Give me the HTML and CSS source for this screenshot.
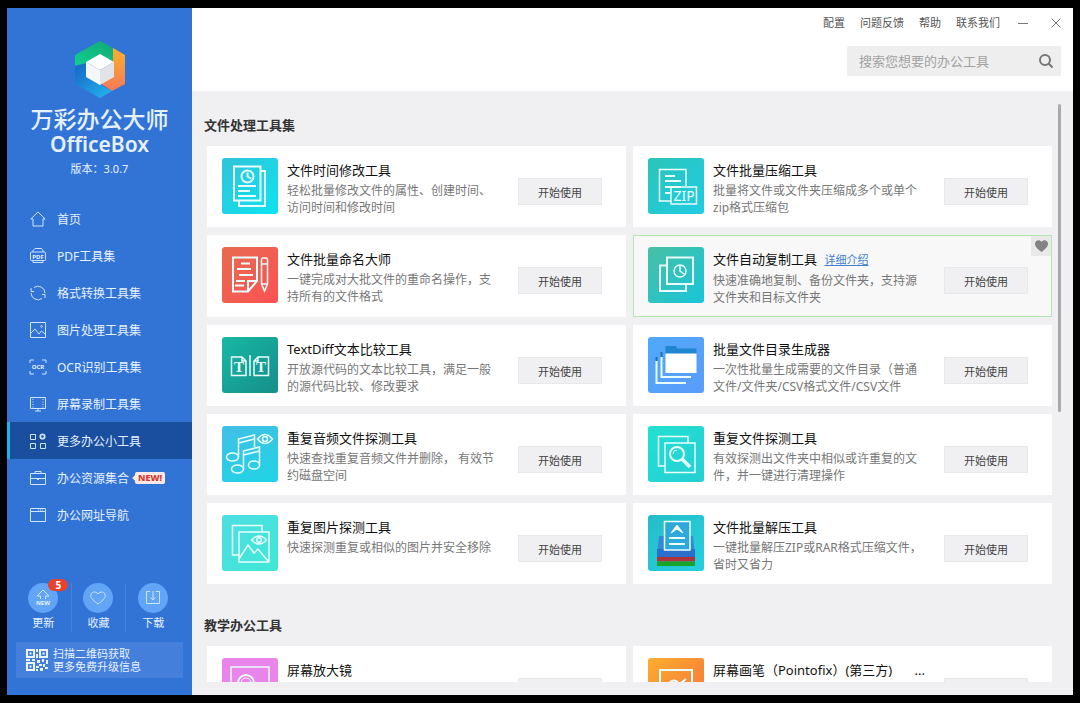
FILE: index.html
```html
<!DOCTYPE html>
<html lang="zh-CN">
<head>
  <meta charset="UTF-8" />
  <meta name="viewport" content="width=device-width, initial-scale=1" />
  <title>万彩办公大师 OfficeBox</title>
  <link rel="stylesheet" href="styles.css">
</head>
<body>

<div class="window">
  <aside class="sidebar">
    <div class="brand">
      <svg class="brand-logo" width="50" height="57" viewBox="0 0 50 57">
        <defs>
          <linearGradient id="lg-green" x1="0" y1="1" x2="1" y2="0"><stop offset="0" stop-color="#0fd090"/><stop offset="1" stop-color="#11a873"/></linearGradient>
          <linearGradient id="lg-orange" x1="0" y1="0" x2="0" y2="1"><stop offset="0" stop-color="#fbb02a"/><stop offset="1" stop-color="#f5785a"/></linearGradient>
          <linearGradient id="lg-blue" x1="0" y1="0" x2="1" y2="1"><stop offset="0" stop-color="#1565c8"/><stop offset="1" stop-color="#25b6ee"/></linearGradient>
        </defs>
        <path d="M0 14 25 0 38 7V22L25 15 12 22 0 25z" fill="url(#lg-green)"/>
        <path d="M38 7 50 14V43L37 50 25 42 38 35z" fill="url(#lg-orange)"/>
        <path d="M0 25 12 22V36L37 50 25 57 0 43z" fill="url(#lg-blue)"/>
        <path d="M25 13 39 21 25 29 11 21z" fill="#fff"/>
        <path d="M11 21 25 29V44L11 36z" fill="#f4f6f8"/>
        <path d="M39 21 25 29V44L39 36z" fill="#e0e3e7"/>
      </svg>
      <h1 class="brand-name">万彩办公大师</h1>
      <p class="brand-en">OfficeBox</p>
      <p class="brand-version">版本：3.0.7</p>
    </div>

    <nav class="nav">
      <a class="nav-item" href="#">
        <svg class="nav-icon" viewBox="0 0 16 16"><path d="M.8 8 8 1l7.200 7H13v7H3V8z"/></svg>
        首页
      </a>
      <a class="nav-item" href="#">
        <svg class="nav-icon" viewBox="0 0 16 16"><path d="M3 4V2.500L5 .5h6.500L13 2.500V4M3 12.500v2h10v-2M1.500 4h13q1 0 1 1v6.500q0 1-1 1h-13q-1 0-1-1V5q0-1 1-1z"/><text x="8" y="10.800" class="icon-word">PDF</text></svg>
        PDF工具集
      </a>
      <a class="nav-item" href="#">
        <svg class="nav-icon" viewBox="0 0 16 16"><path d="M4 2.500A7 7 0 0 1 15 8M12 13.500A7 7 0 0 1 1 8M1 3v3.500h3M15 13V9.500h-3"/></svg>
        格式转换工具集
      </a>
      <a class="nav-item" href="#">
        <svg class="nav-icon" viewBox="0 0 16 16"><path d="M.5 .5h15v15H.5zM1 11l4-4 4 5 2.500-3L15 12"/><circle cx="11.500" cy="4.500" r=".8"/></svg>
        图片处理工具集
      </a>
      <a class="nav-item" href="#">
        <svg class="nav-icon" viewBox="0 0 16 16"><path d="M0 4V1h4M12 1h4v3M16 12v3h-4M4 15H0v-3"/><text x="8" y="10" class="icon-word">OCR</text></svg>
        OCR识别工具集
      </a>
      <a class="nav-item" href="#">
        <svg class="nav-icon" viewBox="0 0 16 16"><path d="M.5 1.500h15v11H.5zM5 15h6M8 12.500V15"/><path d="M3 3v9M13 3v9" stroke-dasharray="1 1.500"/></svg>
        屏幕录制工具集
      </a>
      <a class="nav-item active" href="#">
        <svg class="nav-icon" viewBox="0 0 16 16"><path d="M.5 1.500h5v5h-5zM.5 10.500h5v5h-5zM10.500 10.500h5v5h-5z"/><circle cx="12.500" cy="3.500" r="2.200" stroke-width="1.800"/></svg>
        更多办公小工具
      </a>
      <a class="nav-item" href="#">
        <svg class="nav-icon" viewBox="0 0 16 16"><path d="M.5 3.500h15v11H.5zM5 3.500v-2h6v2M.5 8.500h5.500M10 8.500h5.500M6 8.500h4"/><path d="M7 9.500h2"/></svg>
        办公资源集合
        <span class="tag-new">NEW!</span>
      </a>
      <a class="nav-item" href="#">
        <svg class="nav-icon" viewBox="0 0 16 16"><path d="M.5 1.500h15v13H.5zM.5 4.500h15"/><path d="M8 3h6" stroke-dasharray="1 1"/></svg>
        办公网址导航
      </a>
    </nav>

    <div class="shortcuts">
      <button type="button" class="shortcut">
        <span class="shortcut-circle">
          <svg class="shortcut-icon" viewBox="0 0 16 16"><path d="M5.500 9V6H2L8 0l6 6h-3.500v3"/><text x="8" y="15" class="icon-word">NEW</text></svg>
          <span class="count">5</span>
        </span>
        更新
      </button>
      <button type="button" class="shortcut">
        <span class="shortcut-circle">
          <svg class="shortcut-icon" viewBox="0 0 16 16"><path d="M8 14C4 11 .8 8.500 .8 5.500 .8 1.500 6 .8 8 4c2-3.200 7.200-2.500 7.200 1.500C15.200 8.500 12 11 8 14z"/></svg>
        </span>
        收藏
      </button>
      <button type="button" class="shortcut">
        <span class="shortcut-circle">
          <svg class="shortcut-icon" viewBox="0 0 16 16"><path d="M5 1.500H1.500v12h13v-12H11M8 1v9M5.500 7.500 8 10l2.500-2.500"/></svg>
        </span>
        下载
      </button>
    </div>

    <a class="qr-panel" href="#">
      <svg width="22" height="22" viewBox="0 0 22 22">
        <path fill="none" stroke="#eaf3ff" stroke-width="2" d="M1 1h7v7H1zM14 1h7v7h-7zM1 14h7v7H1z"/>
        <path fill="#eaf3ff" d="M3.500 3.500h2v2h-2zM16.500 3.500h2v2h-2zM3.500 16.500h2v2h-2zM10 0h2v3h-2zM10 5h2v4h-2zM0 10h4v2H0zM6 10h3v2H6zM11 11h3v3h-3zM16 10h2v3h-2zM20 11h2v4h-2zM13 15h3v2h-3zM10 17h3v2h-3zM17 15h2v3h-2zM14 19h3v3h-3zM19 18h3v2h-3zM10 20h2v2h-2z"/>
      </svg>
      <span>扫描二维码获取<br />更多免费升级信息</span>
    </a>
  </aside>

  <div class="main">
    <header class="header">
      <div class="menu">
        <a href="#">配置</a>
        <a href="#">问题反馈</a>
        <a href="#">帮助</a>
        <a href="#">联系我们</a>
        <button type="button" class="win-btn" aria-label="最小化"><svg width="10" height="10" viewBox="0 0 10 10"><path d="M0 5.500h10"/></svg></button>
        <button type="button" class="win-btn win-close" aria-label="关闭"><svg width="10" height="10" viewBox="0 0 10 10"><path d="m.5 .5 9 9M9.500.5l-9 9"/></svg></button>
      </div>
      <form class="search">
        <input type="text" class="search-input" placeholder="搜索您想要的办公工具" aria-label="搜索办公工具" />
        <button type="submit" class="search-btn" aria-label="搜索">
          <svg width="14" height="14" viewBox="0 0 14 14"><circle cx="6" cy="6" r="5"/><path d="m9.500 9.500 4 4"/></svg>
        </button>
      </form>
    </header>

    <main class="content">
      <div class="scroll">
        <section class="group">
          <h2 class="group-title">文件处理工具集</h2>
          <div class="cards">

            <article class="card">
              <svg class="tile tile-cyan" viewBox="0 0 56 56"><path d="M12 8.500h26.500v34H12z"/><path d="M38.500 13H43v35H17v-5.500"/><circle cx="25.500" cy="18.500" r="6"/><path d="M25.500 14.500v4l3.500 2M16 28h18M16 33h12M16 38h18"/></svg>
              <div class="card-text">
                <h3>文件时间修改工具</h3>
                <p>轻松批量修改文件的属性、创建时间、访问时间和修改时间</p>
              </div>
              <button type="button" class="start">开始使用</button>
            </article>

            <article class="card">
              <svg class="tile tile-aqua" viewBox="0 0 56 56"><path d="M38 28V11.500H11.500V43H23" stroke-width="1.500"/><path d="M17 18h10M17 23h16M17 29h16M17 35h5"/><path d="M23 29h25.500v17H23z" stroke-width="1.500"/><text x="36" y="43" class="tile-zip">ZIP</text></svg>
              <div class="card-text">
                <h3>文件批量压缩工具</h3>
                <p>批量将文件或文件夹压缩成多个或单个zip格式压缩包</p>
              </div>
              <button type="button" class="start">开始使用</button>
            </article>

            <article class="card">
              <svg class="tile tile-red" viewBox="0 0 56 56"><path d="M35 34V10.500H11v34h15zM26 44.500V34h9M19 16.500h9M15 22h14M17 28h14M14 34h9M13 38.500h9"/><path d="M39.500 12.500q0-1.500 1.500-1.500h3q1.500 0 1.500 1.500V37l-3 7-3-7zM39.500 17h6M39.500 37h6" stroke-width="1.500"/></svg>
              <div class="card-text">
                <h3>文件批量命名大师</h3>
                <p>一键完成对大批文件的重命名操作，支持所有的文件格式</p>
              </div>
              <button type="button" class="start">开始使用</button>
            </article>

            <article class="card hover">
              <svg class="tile tile-mint" viewBox="0 0 56 56"><path d="M19 18.500h-7V44h26v-7M19 10.500h26V37H19z"/><circle cx="32" cy="24" r="6" stroke-width="1.500"/><path d="M32 18v6l4 3" stroke-width="1.500"/></svg>
              <div class="card-text">
                <h3>文件自动复制工具 <a class="detail" href="#">详细介绍</a></h3>
                <p>快速准确地复制、备份文件夹，支持源文件夹和目标文件夹</p>
              </div>
              <button type="button" class="start">开始使用</button>
              <button type="button" class="fav" aria-label="收藏"><svg width="13" height="12" viewBox="0 0 13 12"><path fill="#838383" d="M6.500 12C3 9.500 0 7 0 3.800 0 0 4.800-1.200 6.500 2 8.200-1.200 13 0 13 3.800 13 7 10 9.500 6.500 12z"/></svg></button>
            </article>

            <article class="card">
              <svg class="tile tile-teal" viewBox="0 0 56 56"><path d="M9.500 20H20l4 4v14.500H9.500zM20 20v4h4M46.500 20H36l-4 4v14.500h14.500zM36 20v4h-4M28 18v21" stroke-width="1.500"/><text x="17" y="35" class="tile-serif">T</text><text x="39" y="35" class="tile-serif">T</text></svg>
              <div class="card-text">
                <h3>TextDiff文本比较工具</h3>
                <p>开放源代码的文本比较工具，满足一般的源代码比较、修改要求</p>
              </div>
              <button type="button" class="start">开始使用</button>
            </article>

            <article class="card">
              <svg class="tile tile-blue" viewBox="0 0 56 56"><path d="M8.500 24v22H38M13.500 20v20H43"/><path d="M8.500 20v4M13.500 15v5" stroke="#1c70b5"/><path d="M17.500 9H28l1.500 2.500h19V17h-31z" fill="#1f86d0" stroke="none"/><path d="M17.500 16.500h31V36h-31z" fill="#fff" stroke="none"/></svg>
              <div class="card-text">
                <h3>批量文件目录生成器</h3>
                <p>一次性批量生成需要的文件目录（普通文件/文件夹/CSV格式文件/CSV文件</p>
              </div>
              <button type="button" class="start">开始使用</button>
            </article>

            <article class="card">
              <svg class="tile tile-sky" viewBox="0 0 56 56"><g stroke-width="1.500"><ellipse cx="10.500" cy="31" rx="6" ry="4"/><path d="M16.500 31V13l16-4v12M16.500 17l16-4"/><ellipse cx="15.500" cy="43" rx="6" ry="4"/><path d="M21.500 43V25l16-4v18M21.500 29l16-4"/><ellipse cx="32" cy="39" rx="5.500" ry="4"/><path d="M35.500 13q7.500-9 15 0-7.500 9-15 0z"/><circle cx="43" cy="13" r="2.500"/></g></svg>
              <div class="card-text">
                <h3>重复音频文件探测工具</h3>
                <p>快速查找重复音频文件并删除， 有效节约磁盘空间</p>
              </div>
              <button type="button" class="start">开始使用</button>
            </article>

            <article class="card">
              <svg class="tile tile-green" viewBox="0 0 56 56"><path d="M17 40h-6.500V10.500H40V17M17 17h30v29.500H17z" stroke-width="1.500"/><circle cx="29" cy="28" r="7"/><path d="M25 28a4 4 0 0 1 4-4" stroke-width="1"/><path d="m34 33 8 8" stroke-width="3.500"/></svg>
              <div class="card-text">
                <h3>重复文件探测工具</h3>
                <p>有效探测出文件夹中相似或许重复的文件，并一键进行清理操作</p>
              </div>
              <button type="button" class="start">开始使用</button>
            </article>

            <article class="card">
              <svg class="tile tile-turq" viewBox="0 0 56 56"><path d="M17 40h-6.500V10.500H40V17M17 17h30v30H17zM17 44l9-14 6 8 4-4 10 12" stroke-width="1.500"/><path d="M29.500 25q7.500-8 15 0-7.500 8-15 0z" stroke-width="1.500"/><circle cx="37" cy="25" r="2.200" stroke-width="1.500"/></svg>
              <div class="card-text">
                <h3>重复图片探测工具</h3>
                <p>快速探测重复或相似的图片并安全移除</p>
              </div>
              <button type="button" class="start">开始使用</button>
            </article>

            <article class="card">
              <svg class="tile tile-lake" viewBox="0 0 56 56"><g stroke="none"><path d="M11 21h34l2 20H9z" fill="#3388d8"/><path d="M9 34h38v8H9z" fill="#2b6fca"/><path d="M9 42h38v4.500H9z" fill="#b0323c"/><path d="M9 46.500h38V51H9z" fill="#18a32c"/></g><path d="M16.500 6.500h25.500V35H16.500z" fill="#2fa8dc" stroke-width="1.500"/><path d="m23 18 6-8 6 8-6-4z" fill="#fff" stroke-width="1"/><path d="M21 23h16M21 29h16"/></svg>
              <div class="card-text">
                <h3>文件批量解压工具</h3>
                <p>一键批量解压ZIP或RAR格式压缩文件，省时又省力</p>
              </div>
              <button type="button" class="start">开始使用</button>
            </article>

          </div>
        </section>

        <section class="group">
          <h2 class="group-title">教学办公工具</h2>
          <div class="cards">
            <article class="card">
              <svg class="tile tile-pink" viewBox="0 0 56 56"><path d="M18 40H9V9h38v31h-9" stroke-width="1.500"/><circle cx="24" cy="25" r="8"/><circle cx="24" cy="25" r="5" stroke-width="1"/><path d="m30 31 10 11" stroke-width="3"/></svg>
              <div class="card-text">
                <h3>屏幕放大镜</h3>
              </div>
              <button type="button" class="start">开始使用</button>
            </article>
            <article class="card">
              <svg class="tile tile-orange" viewBox="0 0 56 56"><path d="M12 12h32v28H12z"/><path d="M30 24c-6-4-12 2-8 6s8 0 6-3M29 28l9-7"/></svg>
              <div class="card-text">
                <h3 class="long">屏幕画笔（Pointofix）(第三方) <span>...</span></h3>
              </div>
              <button type="button" class="start">开始使用</button>
            </article>
          </div>
        </section>
      </div>
      <div class="scroll-thumb"></div>
    </main>
  </div>
</div>

</body>
</html>
```

FILE: styles.css
```css
* {
  box-sizing: border-box;
}
body {
  margin: 0;
  padding: 8px 7px;
  height: 100vh;
  background: #000;
  color: #222;
  font-family: "Noto Sans", "Noto Sans CJK SC", sans-serif;
  font-size: 12px;
}
h1, h2, h3, p {
  margin: 0;
  font-weight: 400;
}
a {
  color: inherit;
  text-decoration: none;
}
button, input {
  font-family: inherit;
  border: none;
  padding: 0;
  background: none;
}
button {
  cursor: pointer;
}
.window {
  display: grid;
  grid-template-columns: 185px minmax(0, 1fr);
  height: 100%;
}

/* sidebar */
.sidebar {
  display: flex;
  flex-direction: column;
  min-height: 0;
  background: #3274d6;
  color: #e6f1ff;
}
.brand {
  display: flex;
  flex-direction: column;
  align-items: center;
  padding-top: 33px;
}
.brand-name {
  margin-top: 6px;
  font-family: "Noto Sans CJK SC", sans-serif;
  font-size: 23px;
  font-weight: 500;
  line-height: 28px;
}
.brand-en {
  font-family: "Noto Sans", sans-serif;
  font-size: 21px;
  font-weight: 600;
  line-height: 24px;
}
.brand-version {
  margin-top: 4px;
  font-size: 11px;
  line-height: 18px;
}
.nav {
  margin-top: 22px;
}
.nav-item {
  display: flex;
  align-items: center;
  height: 37px;
  padding-left: 20px;
  border-left: 3px solid transparent;
}
.nav-item.active {
  background: #1a4f9f;
  border-left-color: #21b4e6;
}
.nav-icon {
  width: 16px;
  height: 16px;
  margin-right: 11px;
  overflow: visible;
}
.nav-icon, .shortcut-icon {
  fill: none;
  stroke: #cfe4ff;
  stroke-width: 1;
}
.icon-word {
  fill: #e6f1ff;
  stroke: none;
  font-size: 6px;
  font-weight: 700;
  text-anchor: middle;
}
.tag-new {
  position: relative;
  margin-left: 6px;
  padding: 0 3px;
  border-radius: 2px;
  background: #ffe9e6;
  color: #d8332c;
  font-size: 9px;
  font-weight: 800;
  line-height: 12px;
}
.tag-new::before {
  content: "";
  position: absolute;
  top: 4px;
  left: -2px;
  width: 4px;
  height: 4px;
  background: #ffe9e6;
  transform: rotate(45deg);
}
.shortcuts {
  display: grid;
  grid-template-columns: repeat(3, 1fr);
  margin: auto 12px 10px 9px;
}
.shortcut {
  display: flex;
  flex-direction: column;
  align-items: center;
  color: #e6f1ff;
  font-size: 11px;
  line-height: 18px;
}
.shortcut + .shortcut {
  border-left: 1px solid #4381dd;
}
.shortcut-circle {
  position: relative;
  display: flex;
  align-items: center;
  justify-content: center;
  width: 30px;
  height: 30px;
  margin-bottom: 1px;
  border-radius: 50%;
  background: #62a4f6;
}
.shortcut-icon {
  width: 16px;
  height: 16px;
}
.count {
  position: absolute;
  top: -4px;
  right: -10px;
  width: 20px;
  border-radius: 6px;
  background: #e5432f;
  color: #fff;
  font-size: 10px;
  font-weight: 700;
  line-height: 12px;
  text-align: center;
}
.qr-panel {
  display: flex;
  align-items: center;
  gap: 5px;
  margin: 0 9px 17px;
  padding: 5px 10px;
  background: #447fdc;
  font-size: 11px;
  line-height: 13px;
}

/* header */
.main {
  display: flex;
  flex-direction: column;
  min-width: 0;
  min-height: 0;
  background: #f0f0f3;
}
.header {
  display: flex;
  flex-direction: column;
  align-items: flex-end;
  gap: 13px;
  height: 83px;
  padding: 5px 12px 0;
  background: #fff;
}
.menu {
  display: flex;
  align-items: center;
  gap: 15px;
  color: #555;
  font-size: 11px;
  line-height: 20px;
}
.win-btn {
  display: flex;
  margin-left: 3px;
}
.win-close {
  margin-left: 8px;
}
.win-btn svg {
  stroke: #777;
}
.search {
  display: flex;
  align-items: center;
  width: 214px;
  height: 30px;
  padding: 0 8px 0 12px;
  border-radius: 2px;
  background: #eee;
}
.search-input {
  flex: 1;
  min-width: 0;
  font-size: 13px;
  outline: none;
}
.search-input::placeholder {
  color: #a2a2a2;
}
.search-btn {
  display: flex;
}
.search-btn svg {
  fill: none;
  stroke: #777;
  stroke-width: 2;
}

/* tool list */
.content {
  position: relative;
  flex: 1;
  min-height: 0;
  padding-bottom: 13px;
}
.scroll {
  height: 100%;
  padding: 24px 21px 0 15px;
  overflow-y: auto;
  scrollbar-width: none;
}
.scroll-thumb {
  position: absolute;
  top: 13px;
  right: 12px;
  width: 3px;
  height: 51%;
  border-radius: 2px;
  background: #a9a9ad;
}
.group {
  margin-bottom: 31px;
}
.group-title {
  margin: 0 0 11px -3px;
  color: #333;
  font-size: 13px;
  font-weight: 600;
  line-height: 20px;
}
.cards {
  display: grid;
  grid-template-columns: repeat(2, minmax(0, 1fr));
  gap: 8px 7px;
}
.card {
  position: relative;
  display: flex;
  align-items: flex-start;
  min-height: 81px;
  padding: 11px 23px 10px 14px;
  border: 1px solid #fff;
  background: #fff;
}
.card.hover {
  border-color: #b4e6b0;
  background: #f8f8f8;
}
.tile {
  flex: none;
  width: 56px;
  height: 56px;
  border-radius: 3px;
  fill: none;
  stroke: #e9feff;
  stroke-width: 2;
}
.tile-cyan { background: linear-gradient(135deg, #31c3d8, #0de4f0); }
.tile-aqua { background: linear-gradient(135deg, #2cc4b8, #1fcce4); }
.tile-red { background: linear-gradient(135deg, #e76c50, #fb5153); }
.tile-mint { background: linear-gradient(135deg, #49bfa2, #18c5da); }
.tile-teal { background: linear-gradient(135deg, #18b8a4, #158e8a); }
.tile-blue { background: linear-gradient(135deg, #4fa9f8, #5b9cfb); }
.tile-sky { background: linear-gradient(160deg, #42bfe6, #1fd4e4); }
.tile-green { background: linear-gradient(135deg, #22e0d2, #26cfd4); }
.tile-turq { background: linear-gradient(135deg, #4fdde2, #3fe8d6); }
.tile-lake { background: linear-gradient(135deg, #26bdc8, #25cfe0); }
.tile-pink { background: #e884ea; }
.tile-orange { background: linear-gradient(135deg, #fbae2e, #f76f3c); }
.tile-zip {
  fill: #e9feff;
  stroke: none;
  font-size: 14px;
  text-anchor: middle;
}
.tile-serif {
  fill: #e9feff;
  stroke: none;
  font-family: "Liberation Serif", serif;
  font-size: 15px;
  font-weight: 700;
  text-anchor: middle;
}
.card-text {
  flex: 1;
  min-width: 0;
  padding: 2px 19px 0 9px;
}
.card-text h3 {
  color: #111;
  font-size: 13px;
  line-height: 20px;
  white-space: nowrap;
}
.card-text h3.long {
  display: flex;
  justify-content: space-between;
}
.card-text p {
  margin-top: 2px;
  color: #777;
  line-height: 17px;
}
.detail {
  margin-left: 4px;
  color: #3f7fd0;
  font-size: 11px;
  text-decoration: underline;
}
.start {
  flex: none;
  width: 84px;
  height: 27px;
  margin-top: 20px;
  border: 1px solid #e8e8eb;
  background: #f0f0f2;
  color: #444;
  font-size: 11px;
}
.fav {
  position: absolute;
  top: 0;
  right: 0;
  display: flex;
  align-items: center;
  justify-content: center;
  width: 20px;
  height: 20px;
  background: #e9e9e9;
}
```
